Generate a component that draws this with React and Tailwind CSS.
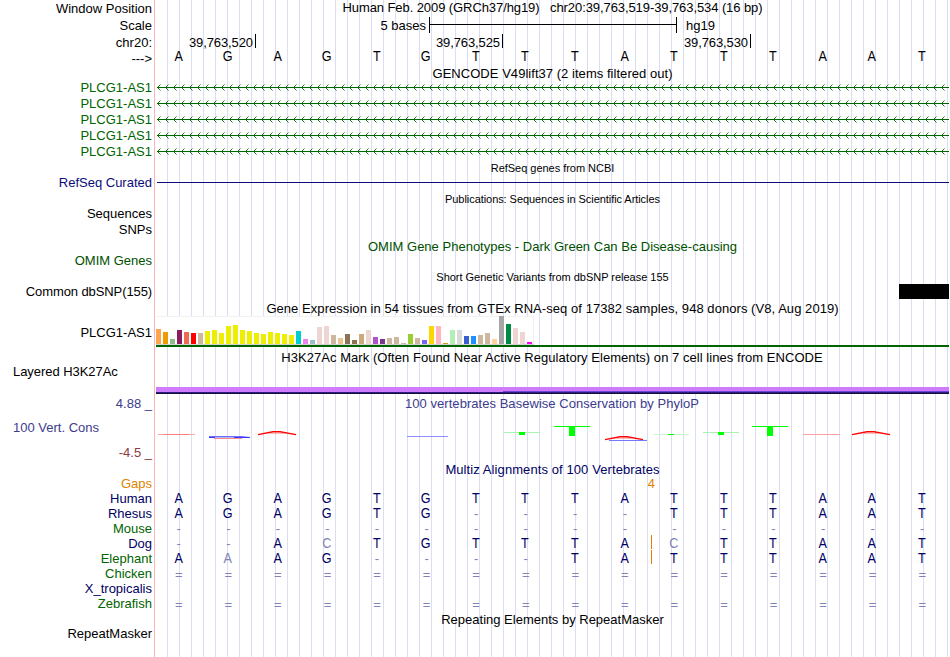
import React from "react";

const SEQUENCE = "AGAGTGTTTATTTAAT";

// GTEx tissues: [bar height, colour]
const TISSUES = [
  [15, "#ffa54f"], [12, "#ee9a00"], [5, "#8fbc8f"], [14, "#8b1c62"], [12, "#ee6a50"], [11, "#ff0000"],
  [11, "#cdb79e"], [13, "#eeee00"], [14, "#eeee00"], [11, "#eeee00"], [18, "#eeee00"], [19, "#eeee00"],
  [14, "#eeee00"], [13, "#eeee00"], [11, "#eeee00"], [10, "#eeee00"], [12, "#eeee00"], [11, "#eeee00"],
  [10, "#eeee00"], [9, "#eeee00"], [13, "#00cdcd"], [5, "#ee82ee"], [4, "#9ac0cd"], [17, "#eed5d2"],
  [18, "#eed5d2"], [9, "#cdb79e"], [6, "#eec591"], [10, "#8b7355"], [4, "#8b7355"], [10, "#cdaa7d"],
  [14, "#eed5d2"], [7, "#b452cd"], [5, "#7a378b"], [6, "#cdb79e"], [7, "#cdb79e"], [1, "#cdb79e"],
  [10, "#9acd32"], [6, "#cdb79e"], [4, "#7a67ee"], [18, "#ffd700"], [18, "#ffb6c1"], [1, "#cd9b1d"],
  [14, "#b4eeb4"], [14, "#d9d9d9"], [8, "#3a5fcd"], [8, "#1e90ff"], [9, "#cdb79e"], [11, "#cdb79e"],
  [5, "#ffd39b"], [28, "#a6a6a6"], [20, "#008b45"], [16, "#eed5d2"], [12, "#eed5d2"], [2, "#ff00ff"],
];

// faded = position of a base that differs from human, insert = gap marker after base 10
const SPECIES = [
  { name: "Human", color: "text-[#000064]", bases: SEQUENCE },
  { name: "Rhesus", color: "text-[#000064]", bases: "AGAGTG----TTTAAT" },
  { name: "Mouse", color: "text-[#006400]", bases: "----------------" },
  { name: "Dog", color: "text-[#000064]", bases: "--ACTGTTTACTTAAT", faded: [3, 10], insert: true },
  { name: "Elephant", color: "text-[#006400]", bases: "AAAG----TATTTAAT", faded: [1], insert: true },
  { name: "Chicken", color: "text-[#006400]", bases: "================" },
  { name: "X_tropicalis", color: "text-[#000064]", bases: "" },
  { name: "Zebrafish", color: "text-[#006400]", bases: "================" },
];

const Row = ({ label, color = "text-black", height, children }) => (
  <div className={`flex ${height}`}>
    <div className={`flex w-[156px] shrink-0 items-center justify-end pr-[4px] ${color}`}>{label}</div>
    <div className="w-[793px] shrink-0">{children}</div>
  </div>
);

const Title = ({ height, color = "text-black", size = "text-[13px]", spacing = "tracking-normal", children }) => (
  <div className={`ml-[156px] flex w-[793px] items-center justify-center whitespace-pre ${height} ${color} ${size} ${spacing}`}>
    <span>{children}</span>
  </div>
);

const baseStyle = (base, faded, color) => {
  if (base === "=") return "text-[13px] text-[#8282b4] pl-px pt-px -mb-px";
  if (base === "-") return "text-[13px] text-[#8282b4] pl-px";
  return `text-[14px] scale-x-90 ${faded ? "text-[#8282b4]" : color}`;
};

const Bases = ({ bases, faded = [], color = "text-[#000064]" }) => (
  <div className="-ml-[2.5px] grid h-[15px] w-[793px] grid-cols-16 grid-rows-[15px] text-center leading-[15px]">
    {bases.split("").map((base, i) => (
      <span key={i} className={baseStyle(base, faded.includes(i), color)}>
        {base}
      </span>
    ))}
  </div>
);

const Transcript = () => (
  <svg className="block h-4 w-full" viewBox="0 0 793 16" fill="none" stroke="#006400">
    <path d="M1 8.5H793" />
    {Array.from({ length: 99 }, (_, i) => (
      <path key={i} d={`M${i * 8 + 4.5} 5.5L${i * 8 + 1.5} 8.5L${i * 8 + 4.5} 11.5`} strokeWidth="0.9" />
    ))}
  </svg>
);

const Expression = () => (
  <div className="flex h-[31px] flex-col">
    <div className="flex h-[29px] w-[378px] items-end gap-[2px] border-b border-[#d3d3d3] bg-white shadow-[inset_0_1px_0_#f2f2f2,inset_-1px_0_0_#f2f2f2]">
      {TISSUES.map(([height, color], i) => (
        <div key={i} className="w-[5px] shrink-0" style={{ height, backgroundColor: color }} />
      ))}
    </div>
    <div className="h-[2px] bg-[#006400]" />
  </div>
);

// Conservation letters, squashed to the height of their score
const PhyloP = () => (
  <svg className="block h-[30px] w-full" viewBox="156 417 793 30" fill="none">
    <path d="M158 434.5H195" stroke="#ffa8a8" />
    <path d="M164 434.5H189" stroke="#ff7c7c" />
    <path d="M209 436.5H242L250 437.5" stroke="#6e6eff" />
    <path d="M209 437.5H215M234 437.5H250" stroke="#3c3cff" />
    <path d="M215 437.5H234" stroke="#b4b4ff" />
    <path d="M214 438.5H242" stroke="#ff8c8c" />
    <path d="M258 434.6L273 431.7H280L296 434.6" stroke="#ff0000" strokeWidth="1.4" />
    <path d="M269 433.4H285" stroke="#ff9090" strokeWidth="0.7" />
    <path d="M407 436.5H448" stroke="#8c8cff" />
    <path d="M504 432.5H540" stroke="#a8f5b0" />
    <path d="M519 432H525V435H519Z" fill="#00ff00" />
    <path d="M554 426H590V427H575V436H569V427H554Z" fill="#00ff00" />
    <path d="M605 439.6L620 436.7H627L643 439.6" stroke="#ff0000" strokeWidth="1.4" />
    <path d="M616 438.4H632" stroke="#ff9090" strokeWidth="0.7" />
    <path d="M609 440.5H647" stroke="#7878ff" />
    <path d="M653 434.5H689" stroke="#cdf8d5" />
    <path d="M668 434.5H674" stroke="#00ff00" />
    <path d="M703 432.5H739" stroke="#a8f5b0" />
    <path d="M718 432H724V435H718Z" fill="#00ff00" />
    <path d="M752 426H788V427H773V436H767V427H752Z" fill="#00ff00" />
    <path d="M803 434.5H840" stroke="#ffa0a0" />
    <path d="M852 434.6L867 431.7H874L890 434.6" stroke="#ff0000" strokeWidth="1.4" />
    <path d="M863 433.4H879" stroke="#ff9090" strokeWidth="0.7" />
  </svg>
);

const App = () => {
  return (
    <div className="h-[657px] w-[950px] overflow-hidden bg-white">
      <div className="h-[657px] w-[949px] overflow-hidden whitespace-nowrap bg-[linear-gradient(90deg,white_154px,#ffb4b4_154px,#ffb4b4_155px,white_155px,white_156px,transparent_156px),repeating-linear-gradient(90deg,#dcdcf5_0px,#dcdcf5_1px,white_1px,white_12px)] bg-[position:0_0,-1px_0] bg-no-repeat font-['Liberation_Sans',Arial,sans-serif] text-[13px] leading-[15px]">
        <Row label="Window Position" height="h-4">
          <div className="whitespace-pre text-center leading-[15px] tracking-[-0.085px]">Human Feb. 2009 (GRCh37/hg19)   chr20:39,763,519-39,763,534 (16 bp)</div>
        </Row>
        <Row label="Scale" height="h-[18px]">
          <div className="flex items-center pt-px">
            <span className="w-[273px] pr-[3px] text-right">5 bases</span>
            <span className="flex h-4 w-[248px] items-center border-x border-black">
              <span className="-mt-px h-px w-full bg-black" />
            </span>
            <span className="ml-[9px]">hg19</span>
          </div>
        </Row>
        <Row label="chr20:" height="h-4">
          <div className="flex text-right leading-[17px] tracking-[-0.1px]">
            <span className="h-[14px] w-[100px] border-r border-black pr-[2px]">39,763,520</span>
            <span className="h-[14px] w-[247px] border-r border-black pr-[2px]">39,763,525</span>
            <span className="h-[14px] w-[248px] border-r border-black pr-[2px]">39,763,530</span>
          </div>
        </Row>
        <Row label="--->" height="h-4">
          <div className="-mt-px">
            <Bases bases={SEQUENCE} color="text-black" />
          </div>
        </Row>

        <Title height="h-[13px] pt-[2px]" spacing="tracking-[0.04px]">GENCODE V49lift37 (2 items filtered out)</Title>
        {[1, 2, 3, 4, 5].map((n) => (
          <Row key={n} label="PLCG1-AS1" color="text-[#006400]" height="h-4">
            <Transcript />
          </Row>
        ))}

        <Title height="h-[17px] pt-[2px]" size="text-[11px]" spacing="tracking-[-0.03px]">RefSeq genes from NCBI</Title>
        <Row label="RefSeq Curated" color="text-[#0c0c78]" height="h-[13px]">
          <div className="ml-px mt-[6px] h-px bg-[#0c0c78]" />
        </Row>

        <Title height="h-[17px] pt-[3px]" size="text-[11px]" spacing="tracking-[-0.06px]">Publications: Sequences in Scientific Articles</Title>
        <Row label="Sequences" height="h-[15px]" />
        <Row label="SNPs" height="h-4" />

        <Title height="h-4 pt-[2px]" color="text-[#005000]" spacing="tracking-[0.01px]">OMIM Gene Phenotypes - Dark Green Can Be Disease-causing</Title>
        <Row label="OMIM Genes" color="text-[#005000]" height="h-[15px]" />

        <Title height="h-4 pt-[2px]" size="text-[11px]" spacing="tracking-[-0.02px]">Short Genetic Variants from dbSNP release 155</Title>
        <Row label={<span className="tracking-[-0.1px]">Common dbSNP(155)</span>} height="h-[15px]">
          <div className="ml-auto h-[15px] w-[50px] bg-black" />
        </Row>

        <Title height="h-[17px] pt-[2px]" spacing="tracking-[0.055px]">Gene Expression in 54 tissues from GTEx RNA-seq of 17382 samples, 948 donors (V8, Aug 2019)</Title>
        <Row label={<span className="pt-px">PLCG1-AS1</span>} height="h-[31px]">
          <Expression />
        </Row>

        <Title height="h-[18px] pr-px pt-[2px]" spacing="tracking-[0.045px]">H3K27Ac Mark (Often Found Near Active Regulatory Elements) on 7 cell lines from ENCODE</Title>
        <div className="flex h-[29px]">
          <div className="w-[156px] pl-[13px] leading-[13px] tracking-[-0.05px]">Layered H3K27Ac</div>
          <div className="flex w-[793px] flex-col justify-end">
            <div className="flex h-[5px] items-end bg-[#cf7bfb]">
              <div className="ml-auto h-px w-[446px] bg-[#7040d8]" />
            </div>
            <div className="h-px bg-[#301c80]" />
            <div className="h-px bg-[#10103c]" />
          </div>
        </div>

        <div className="flex h-[68px]">
          <div className="flex w-[156px] flex-col justify-between text-[#3c3c8c]">
            <span className="pr-[4px] pt-[2px] text-right">4.88 _</span>
            <span className="-mt-[2px] pl-[13px]">100 Vert. Cons</span>
            <span className="pb-[2px] pr-[4px] text-right text-[#8c3c3c]">-4.5 _</span>
          </div>
          <div className="w-[793px]">
            <div className="h-[23px] pr-px pt-[2px] text-center tracking-[0.04px] text-[#3c3c8c]">100 vertebrates Basewise Conservation by PhyloP</div>
            <PhyloP />
          </div>
        </div>

        <Title height="h-[14px]" color="text-[#000064]" spacing="tracking-[0.09px]">Multiz Alignments of 100 Vertebrates</Title>
        <Row label="Gaps" color="text-[#e08200]" height="h-[15px]">
          <div className="w-[499px] text-right text-[#e08200]">4</div>
        </Row>
        {SPECIES.map((s) => (
          <Row key={s.name} label={s.name} color={s.color} height="h-[15px]">
            <div className="relative">
              <Bases bases={s.bases} faded={s.faded} />
              {s.insert && <span className="absolute left-[495px] top-[-1px] h-[14px] w-px bg-[#e08200]" />}
            </div>
          </Row>
        ))}

        <Title height="h-4">Repeating Elements by RepeatMasker</Title>
        <Row label="RepeatMasker" height="h-[13px]" />
      </div>
    </div>
  );
};

export default App;
